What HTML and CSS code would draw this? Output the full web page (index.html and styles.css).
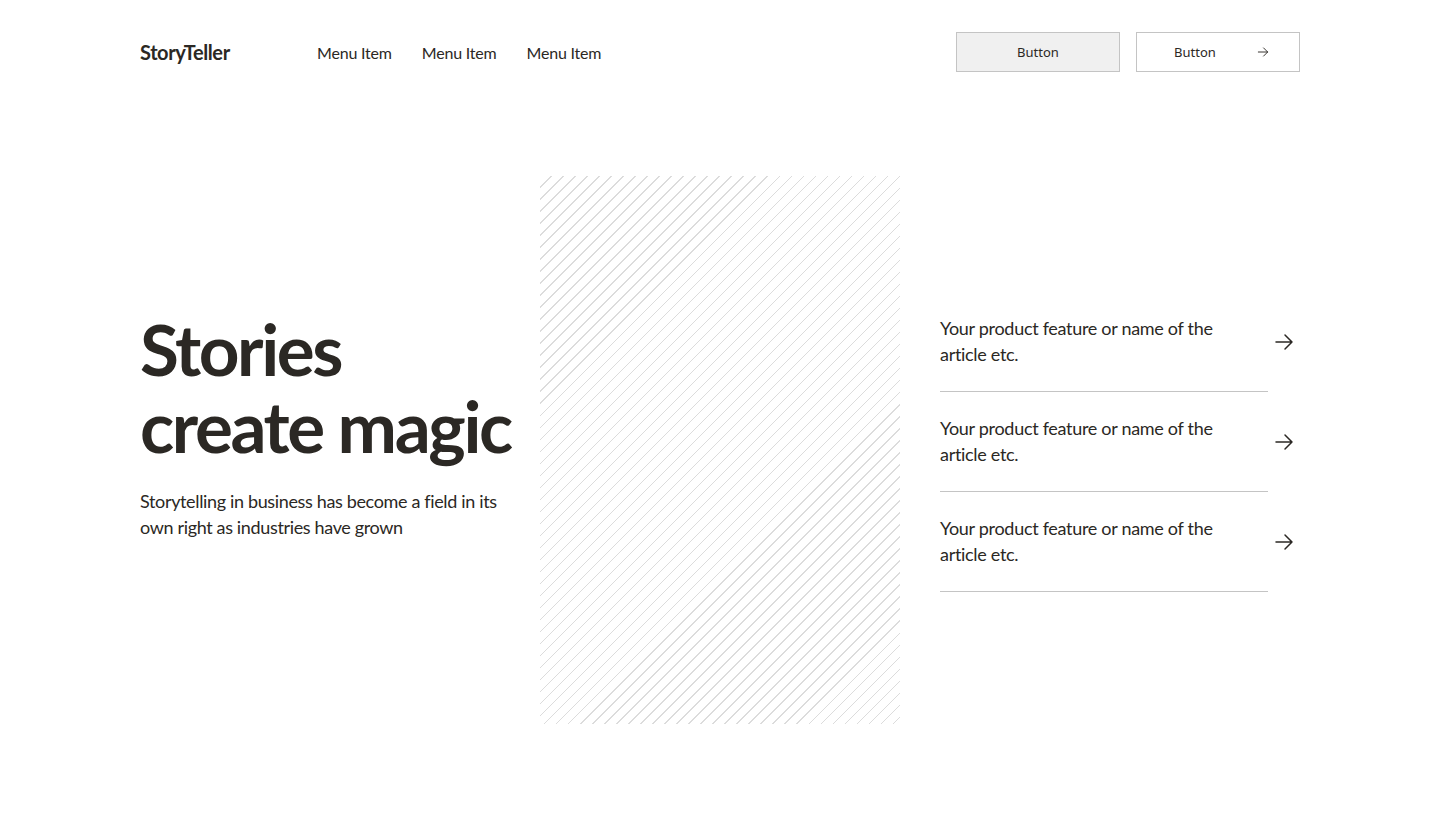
FILE: index.html
```html
<!DOCTYPE html>
<html lang="en">
<head>
<meta charset="utf-8">
<title>StoryTeller</title>
<link rel="stylesheet" href="styles.css">
</head>
<body>
<header class="header">
  <div class="logo">StoryTeller</div>
  <nav class="nav">
    <a href="#">Menu Item</a>
    <a href="#">Menu Item</a>
    <a href="#">Menu Item</a>
  </nav>
  <div class="actions">
    <button class="btn btn-fill">Button</button>
    <button class="btn btn-outline">Button
      <svg width="14" height="14" viewBox="0 0 24 24" fill="none" stroke="currentColor" stroke-width="1.6" stroke-linecap="round" stroke-linejoin="round"><path d="M4 12h16M13 5l7 7-7 7"/></svg>
    </button>
  </div>
</header>
<main class="hero">
  <section class="intro">
    <h1>Stories<br>create magic</h1>
    <p>Storytelling in business has become a field in its own right as industries have grown</p>
  </section>
  <div class="picture"></div>
  <ul class="list">
    <li class="item">
      <span class="item-text">Your product feature or name of the article etc.</span>
      <svg class="arrow" width="24" height="24" viewBox="0 0 24 24" fill="none" stroke="currentColor" stroke-width="1.5" stroke-linecap="round" stroke-linejoin="round"><path d="M4 12h16M13 5l7 7-7 7"/></svg>
    </li>
    <li class="item">
      <span class="item-text">Your product feature or name of the article etc.</span>
      <svg class="arrow" width="24" height="24" viewBox="0 0 24 24" fill="none" stroke="currentColor" stroke-width="1.5" stroke-linecap="round" stroke-linejoin="round"><path d="M4 12h16M13 5l7 7-7 7"/></svg>
    </li>
    <li class="item">
      <span class="item-text">Your product feature or name of the article etc.</span>
      <svg class="arrow" width="24" height="24" viewBox="0 0 24 24" fill="none" stroke="currentColor" stroke-width="1.5" stroke-linecap="round" stroke-linejoin="round"><path d="M4 12h16M13 5l7 7-7 7"/></svg>
    </li>
  </ul>
</main>
</body>
</html>
```
FILE: styles.css
```css
* { box-sizing: border-box; }
html, body { margin: 0; padding: 0; background: #fff; }
body {
  font-family: "Lato", "Open Sans", sans-serif;
  color: #2b2824;
}
.header {
  display: flex;
  align-items: center;
  padding: 32px 140px 0;
  height: 72px;
}
.logo {
  font-size: 20px;
  font-weight: 700;
  letter-spacing: -0.4px;
  width: 177px;
}
.nav {
  display: flex;
  gap: 30px;
  flex: 1;
}
.nav a {
  color: #2b2824;
  text-decoration: none;
  font-size: 16px;
  letter-spacing: -0.2px;
}
.actions {
  display: flex;
  gap: 16px;
}
.btn {
  width: 164px;
  height: 40px;
  border: 1px solid #c4c4c4;
  font-family: "Noto Sans", "Open Sans", sans-serif;
  font-size: 13px;
  color: #2b2824;
  display: flex;
  align-items: center;
  justify-content: center;
  padding: 0;
  cursor: pointer;
}
.btn-fill { background: #f0f0f0; }
.btn-outline { background: #fff; gap: 40px; padding-left: 8px; }
.hero {
  display: flex;
  align-items: center;
  padding: 104px 140px 0;
}
.intro {
  width: 400px;
  padding-bottom: 50px;
}
.intro h1 {
  margin: 0;
  font-size: 71px;
  line-height: 77px;
  font-weight: 700;
  letter-spacing: -2.4px;
}
.intro p {
  margin: 24px 0 0;
  font-size: 18px;
  line-height: 26px;
  width: 380px;
  letter-spacing: -0.35px;
}
.picture {
  width: 360px;
  height: 548px;
  flex: none;
  background: repeating-linear-gradient(135deg, #fff 0, #fff 7.5px, #dcdcdc 7.5px, #dcdcdc 8.5px);
}
.list {
  list-style: none;
  margin: 0 0 16px 40px;
  padding: 0;
  width: 360px;
}
.item {
  display: flex;
  align-items: center;
  gap: 4px;
  height: 100px;
}
.item-text {
  width: 328px;
  height: 100px;
  padding: 23px 40px 0 0;
  font-size: 18px;
  line-height: 26px;
  letter-spacing: -0.3px;
  border-bottom: 1px solid #c4c4c4;
}
.arrow { flex: none; }
```
